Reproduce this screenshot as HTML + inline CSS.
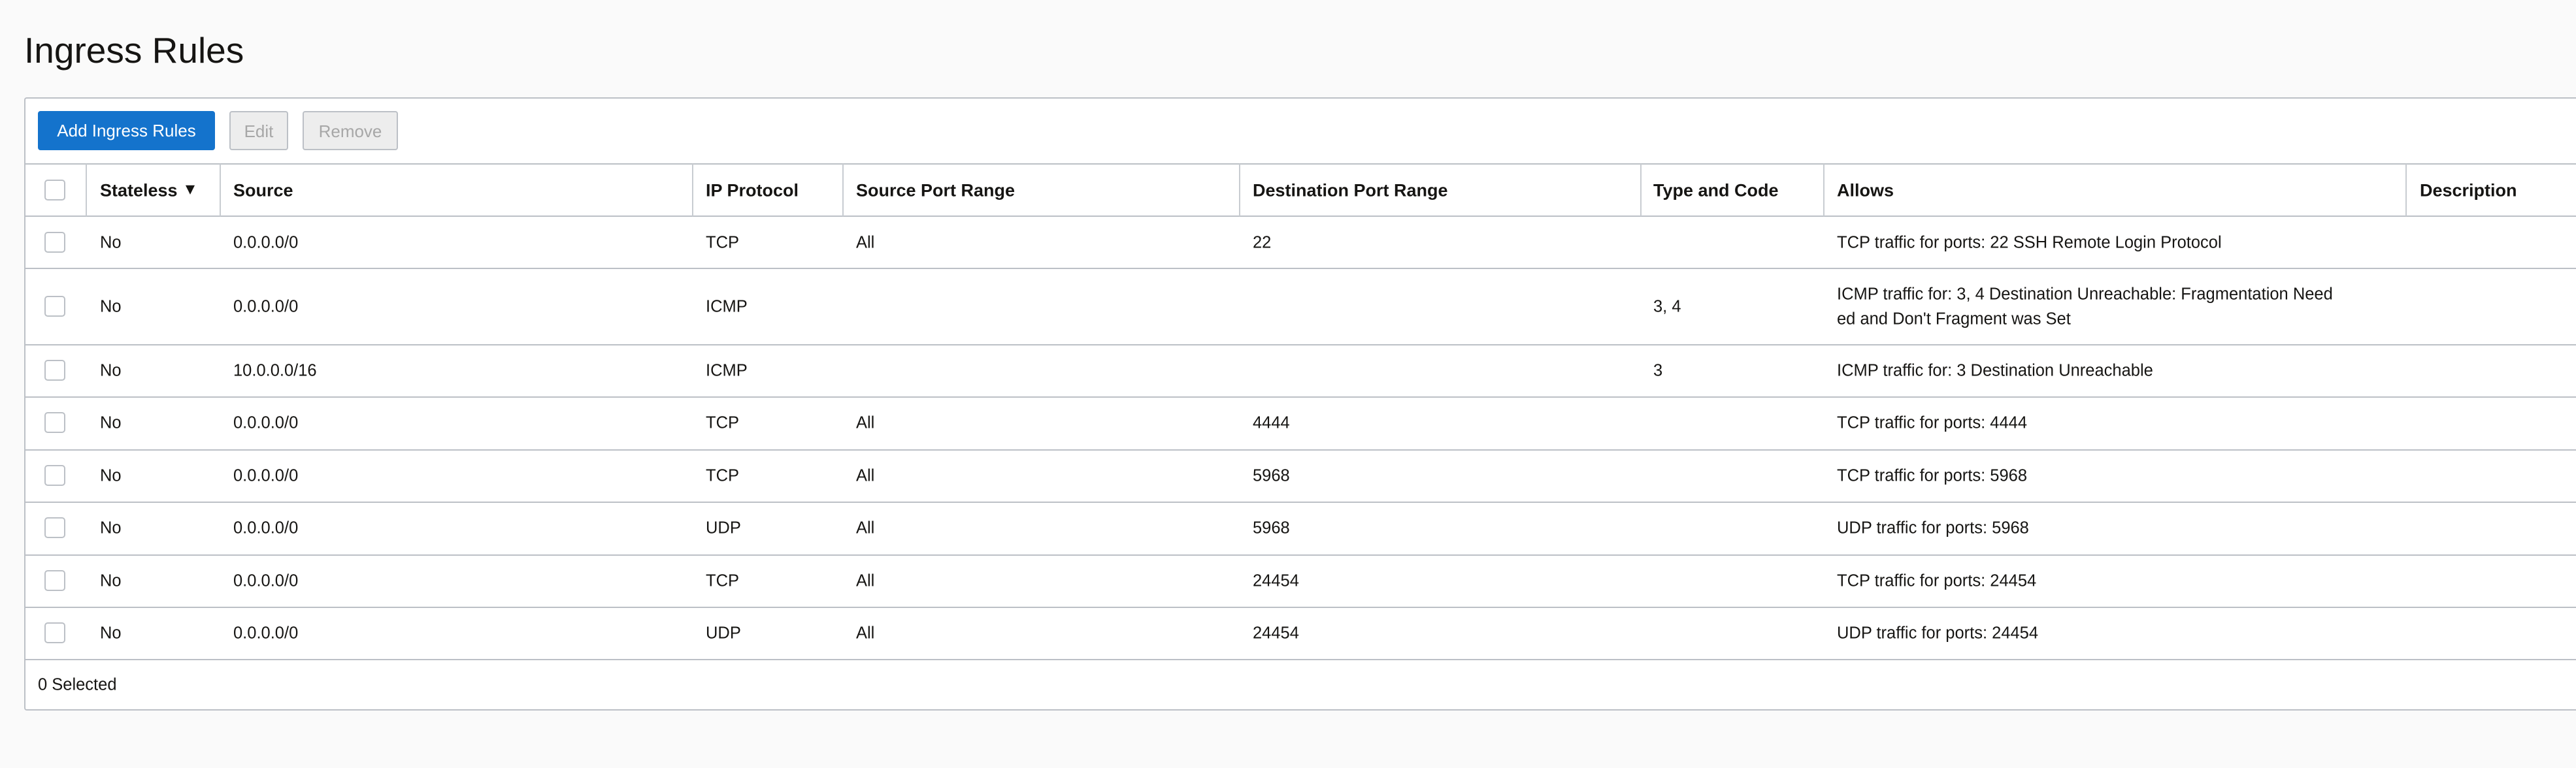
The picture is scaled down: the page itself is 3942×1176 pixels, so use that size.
<!DOCTYPE html>
<html><head><meta charset="utf-8"><style>
html,body{margin:0;padding:0;background:#fafafa;width:3942px;height:1176px;overflow:hidden;font-family:"Liberation Sans",Arial,sans-serif;color:#161513}
h1{position:absolute;left:37px;top:49px;margin:0;font-weight:normal;font-size:55px;line-height:56px}
.card{position:absolute;left:37px;top:149px;width:3920px;height:939px;background:#fff;border:2px solid #bcc0c6;border-right:none;border-radius:4px 0 0 4px;box-sizing:border-box}
.btn{position:absolute;top:170px;height:60px;box-sizing:border-box;border-radius:4px;font-size:26px;line-height:58px;text-align:center}
.b1{left:58px;width:271px;background:#1473cc;color:#fff;border:1px solid #1473cc}
.b2{left:351px;width:90px;background:#ededed;color:#a7a7a7;border:2px solid #bcc0c6}
.b3{left:463px;width:146px;background:#ededed;color:#a7a7a7;border:2px solid #bcc0c6}
.hl{position:absolute;left:37px;width:3905px;height:2px;background:#bcc0c6}
.vl{position:absolute;top:251px;height:80px;width:2px;background:#c8ccd1}
.t{position:absolute;font-size:25.5px;white-space:nowrap;transform:translateY(-50%)}
.h{font-weight:bold;font-size:27px}
.cb{position:absolute;left:68px;width:28px;height:28px;border:2px solid #bcc0c6;border-radius:5px;background:#fff;transform:translateY(-50%)}
</style></head><body>
<h1>Ingress Rules</h1>
<div class="card"></div>
<div class="btn b1">Add Ingress Rules</div>
<div class="btn b2">Edit</div>
<div class="btn b3">Remove</div>

<div class="hl" style="top:250px"></div>
<div class="hl" style="top:330px"></div>
<div class="hl" style="top:410px"></div>
<div class="hl" style="top:527px"></div>
<div class="hl" style="top:607px"></div>
<div class="hl" style="top:688px"></div>
<div class="hl" style="top:768px"></div>
<div class="hl" style="top:849px"></div>
<div class="hl" style="top:929px"></div>
<div class="hl" style="top:1009px"></div>

<div class="vl" style="left:131px"></div>
<div class="vl" style="left:336px"></div>
<div class="vl" style="left:1059px"></div>
<div class="vl" style="left:1289px"></div>
<div class="vl" style="left:1896px"></div>
<div class="vl" style="left:2510px"></div>
<div class="vl" style="left:2790px"></div>
<div class="vl" style="left:3681px"></div>

<div class="cb" style="top:291px"></div>
<div class="t h" style="left:153px;top:292px">Stateless <span style="font-size:24px;position:relative;top:-3px">▼</span></div>
<div class="t h" style="left:357px;top:292px">Source</div>
<div class="t h" style="left:1080px;top:292px">IP Protocol</div>
<div class="t h" style="left:1310px;top:292px">Source Port Range</div>
<div class="t h" style="left:1917px;top:292px">Destination Port Range</div>
<div class="t h" style="left:2530px;top:292px">Type and Code</div>
<div class="t h" style="left:2811px;top:292px">Allows</div>
<div class="t h" style="left:3703px;top:292px">Description</div>

<div class="cb" style="top:371px"></div>
<div class="t" style="left:153px;top:372px">No</div>
<div class="t" style="left:357px;top:372px">0.0.0.0/0</div>
<div class="t" style="left:1080px;top:372px">TCP</div>
<div class="t" style="left:1310px;top:372px">All</div>
<div class="t" style="left:1917px;top:372px">22</div>
<div class="t" style="left:2811px;top:372px">TCP traffic for ports: 22 SSH Remote Login Protocol</div>

<div class="cb" style="top:469px"></div>
<div class="t" style="left:153px;top:470px">No</div>
<div class="t" style="left:357px;top:470px">0.0.0.0/0</div>
<div class="t" style="left:1080px;top:470px">ICMP</div>
<div class="t" style="left:2530px;top:470px">3, 4</div>
<div class="t" style="left:2811px;top:451px">ICMP traffic for: 3, 4 Destination Unreachable: Fragmentation Need</div>
<div class="t" style="left:2811px;top:489px">ed and Don't Fragment was Set</div>

<div class="cb" style="top:567px"></div>
<div class="t" style="left:153px;top:568px">No</div>
<div class="t" style="left:357px;top:568px">10.0.0.0/16</div>
<div class="t" style="left:1080px;top:568px">ICMP</div>
<div class="t" style="left:2530px;top:568px">3</div>
<div class="t" style="left:2811px;top:568px">ICMP traffic for: 3 Destination Unreachable</div>

<div class="cb" style="top:647px"></div>
<div class="t" style="left:153px;top:648px">No</div>
<div class="t" style="left:357px;top:648px">0.0.0.0/0</div>
<div class="t" style="left:1080px;top:648px">TCP</div>
<div class="t" style="left:1310px;top:648px">All</div>
<div class="t" style="left:1917px;top:648px">4444</div>
<div class="t" style="left:2811px;top:648px">TCP traffic for ports: 4444</div>

<div class="cb" style="top:728px"></div>
<div class="t" style="left:153px;top:729px">No</div>
<div class="t" style="left:357px;top:729px">0.0.0.0/0</div>
<div class="t" style="left:1080px;top:729px">TCP</div>
<div class="t" style="left:1310px;top:729px">All</div>
<div class="t" style="left:1917px;top:729px">5968</div>
<div class="t" style="left:2811px;top:729px">TCP traffic for ports: 5968</div>

<div class="cb" style="top:808px"></div>
<div class="t" style="left:153px;top:809px">No</div>
<div class="t" style="left:357px;top:809px">0.0.0.0/0</div>
<div class="t" style="left:1080px;top:809px">UDP</div>
<div class="t" style="left:1310px;top:809px">All</div>
<div class="t" style="left:1917px;top:809px">5968</div>
<div class="t" style="left:2811px;top:809px">UDP traffic for ports: 5968</div>

<div class="cb" style="top:889px"></div>
<div class="t" style="left:153px;top:890px">No</div>
<div class="t" style="left:357px;top:890px">0.0.0.0/0</div>
<div class="t" style="left:1080px;top:890px">TCP</div>
<div class="t" style="left:1310px;top:890px">All</div>
<div class="t" style="left:1917px;top:890px">24454</div>
<div class="t" style="left:2811px;top:890px">TCP traffic for ports: 24454</div>

<div class="cb" style="top:969px"></div>
<div class="t" style="left:153px;top:970px">No</div>
<div class="t" style="left:357px;top:970px">0.0.0.0/0</div>
<div class="t" style="left:1080px;top:970px">UDP</div>
<div class="t" style="left:1310px;top:970px">All</div>
<div class="t" style="left:1917px;top:970px">24454</div>
<div class="t" style="left:2811px;top:970px">UDP traffic for ports: 24454</div>

<div class="t" style="left:58px;top:1049px">0 Selected</div>
</body></html>
